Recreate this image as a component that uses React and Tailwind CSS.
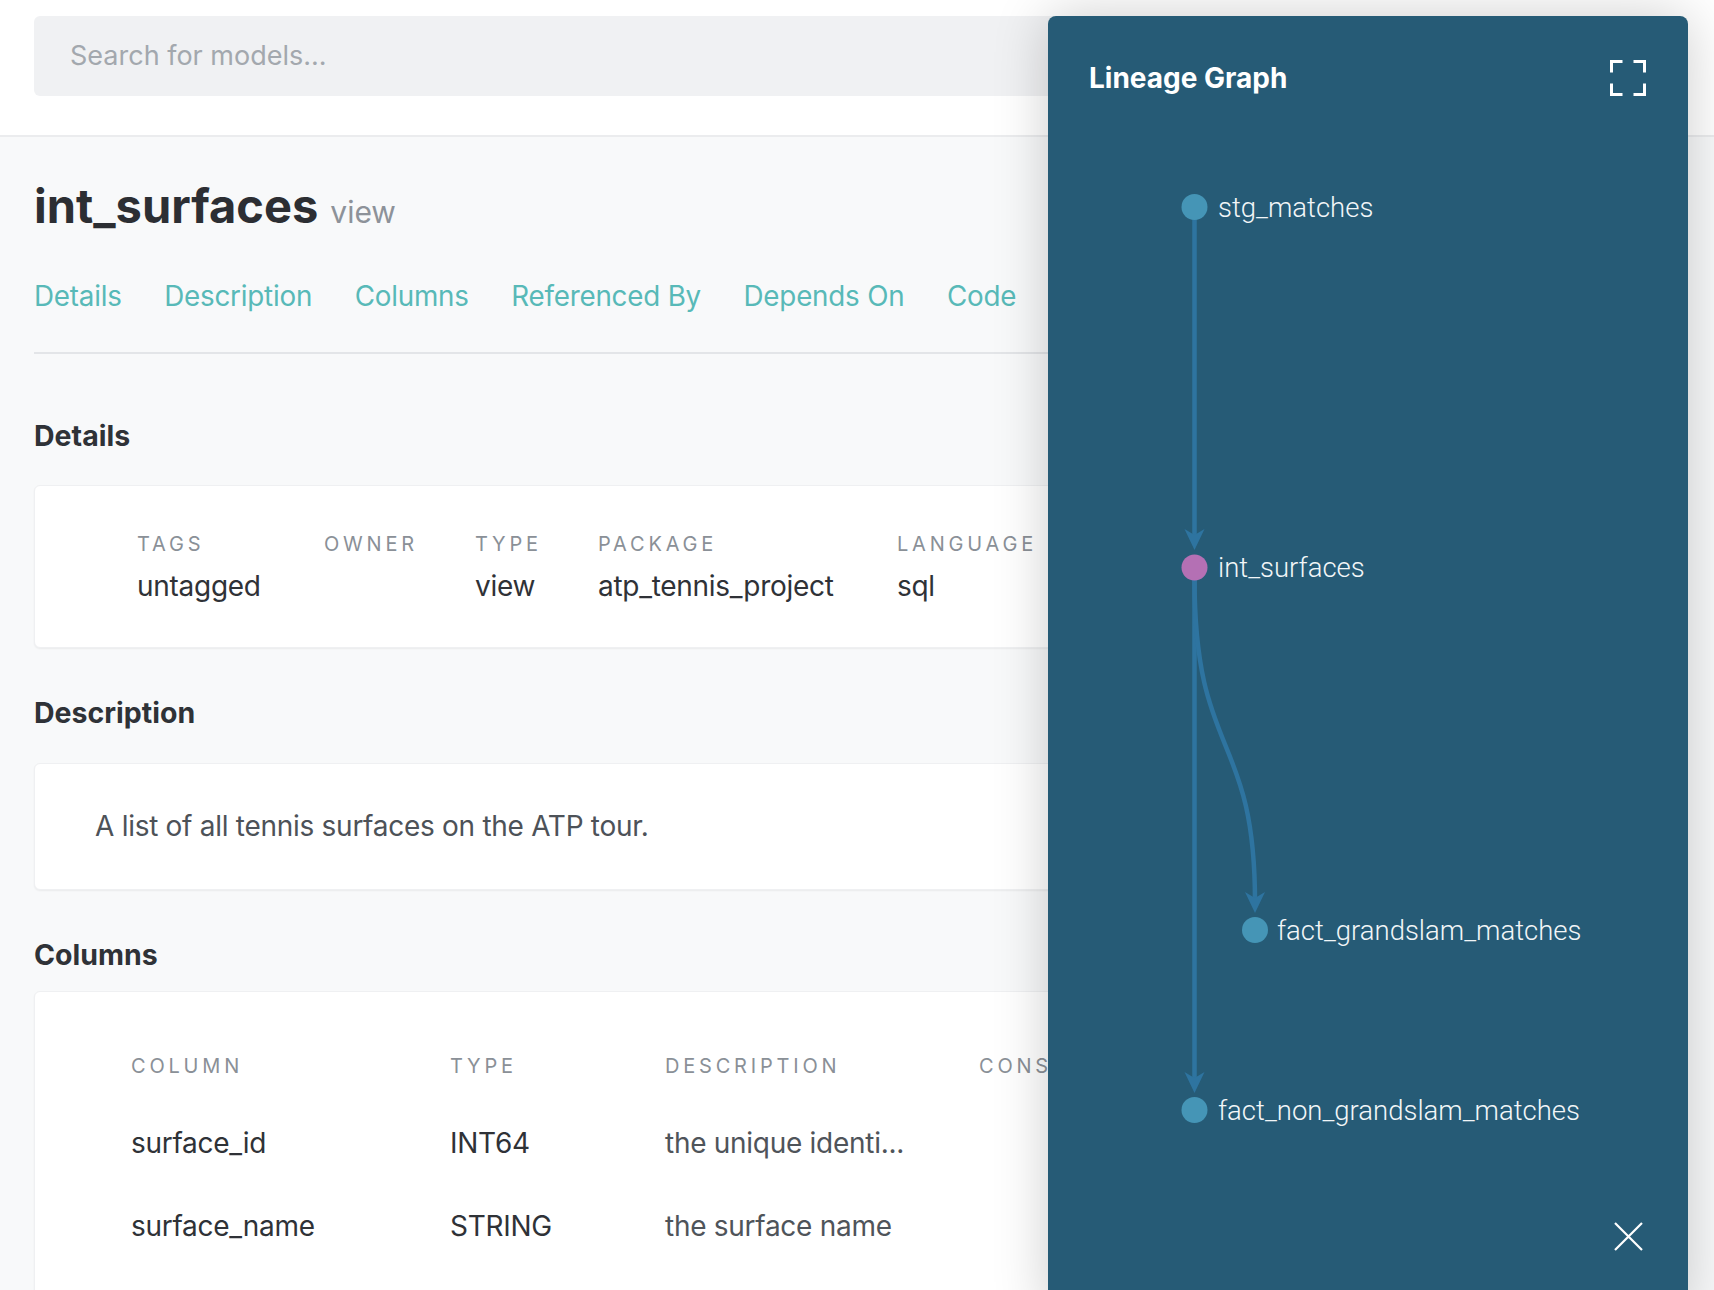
export default function App() {
  const nodeBlue = "#4595b6";
  const edge = "#2e74a0";
  const arrow = (x, y) =>
    `M${x} ${y} L${x - 10} ${y - 21} L${x} ${y - 15} L${x + 10} ${y - 21} Z`;

  const details = [
    { label: "Tags", value: "untagged", w: "w-[187px]" },
    { label: "Owner", value: "", w: "w-[151px]" },
    { label: "Type", value: "view", w: "w-[123px]" },
    { label: "Package", value: "atp_tennis_project", w: "w-[299px]" },
    { label: "Language", value: "sql", w: "w-[200px]" },
  ];

  const rows = [
    ["surface_id", "INT64", "the unique identi..."],
    ["surface_name", "STRING", "the surface name"],
  ];

  const cx = 146.5;

  return (
    <div className="relative w-full h-[1290px] overflow-hidden bg-[#f8f9fa] [font-family:Inter,sans-serif]">
      {/* Header */}
      <div className="h-[137px] bg-white border-b-2 border-[#ebecee] pt-[16px] px-[34px]">
        <div className="h-[80px] rounded-[6px] bg-[#f0f1f3] flex items-center pl-[36px] text-[27px] text-[#a3a8ae]">
          Search for models...
        </div>
      </div>

      {/* Content */}
      <div className="px-[34px] pt-[45px]">
        <div className="flex items-baseline gap-[12px]">
          <h1 className="text-[47px] leading-[48px] font-bold text-[#2c2e33]">int_surfaces</h1>
          <span className="text-[30px] leading-[48px] text-[#8d9299]">view</span>
        </div>

        <nav className="mt-[40px] pb-[36px] border-b-2 border-[#e3e5e8] flex gap-[42.5px] text-[27.8px] tracking-[-0.008em] leading-[40px] text-[#58b9b8]">
          <span>Details</span>
          <span>Description</span>
          <span>Columns</span>
          <span>Referenced By</span>
          <span>Depends On</span>
          <span>Code</span>
        </nav>

        <h3 className="mt-[62px] text-[28.5px] leading-[40px] font-bold text-[#2f3237]">Details</h3>
        <div className="mt-[29px] h-[163px] bg-white rounded-[6px] border border-[#eff0f2] shadow-[0_1px_2px_rgba(0,0,0,0.06)] pt-[46px] pl-[102px] flex">
          {details.map((d) => (
            <div key={d.label} className={`${d.w} shrink-0`}>
              <div className="text-[20px] leading-[24px] uppercase tracking-[0.19em] text-[#8a9097]">{d.label}</div>
              <div className="mt-[10px] text-[28px] leading-[40px] tracking-[-0.01em] text-[#2f3237]">{d.value}</div>
            </div>
          ))}
        </div>

        <h3 className="mt-[45px] text-[28.5px] leading-[40px] font-bold text-[#2f3237]">Description</h3>
        <div className="mt-[30px] bg-white rounded-[6px] border border-[#eff0f2] shadow-[0_1px_2px_rgba(0,0,0,0.06)] pt-[42px] pb-[43px] pl-[60px] text-[28px] leading-[40px] tracking-[-0.01em] text-[#4d5258]">
          A list of all tennis surfaces on the ATP tour.
        </div>

        <h3 className="mt-[45px] text-[28.5px] leading-[40px] font-bold text-[#2f3237]">Columns</h3>
        <div className="mt-[16px] h-[400px] bg-white rounded-[6px] border border-[#eff0f2] shadow-[0_1px_2px_rgba(0,0,0,0.06)] pt-[62px] pl-[96px]">
          <div className="grid grid-cols-[319px_215px_314px_1fr] text-[20px] leading-[24px] uppercase tracking-[0.19em] text-[#8a9097]">
            <div>Column</div>
            <div>Type</div>
            <div>Description</div>
            <div>Constraints</div>
          </div>
          <div className="mt-[45px] flex flex-col gap-[43px]">
            {rows.map((r) => (
              <div key={r[0]} className="grid grid-cols-[319px_215px_314px_1fr] text-[28px] leading-[40px] tracking-[-0.01em]">
                <div className="text-[#2f3237]">{r[0]}</div>
                <div className="text-[#2f3237]">{r[1]}</div>
                <div className="text-[#4f545a]">{r[2]}</div>
                <div></div>
              </div>
            ))}
          </div>
        </div>
      </div>

      {/* Lineage graph panel */}
      <div className="absolute top-[16px] left-[1048px] w-[640px] h-[1300px] bg-[#265b76] rounded-t-[8px] shadow-[0_0_55px_rgba(0,0,0,0.2)]">
        <svg className="absolute left-0 top-0" width="640" height="1274" viewBox="0 0 640 1274">
          <line x1={cx} y1="200" x2={cx} y2="522" stroke={edge} strokeWidth="4.5" />
          <path d={arrow(cx, 534)} fill={edge} />
          <line x1={cx} y1="560" x2={cx} y2="1066" stroke={edge} strokeWidth="4.5" />
          <path d={arrow(cx, 1077)} fill={edge} />
          <path d={`M${cx} 562 C${cx} 744 207 714 207 886`} fill="none" stroke={edge} strokeWidth="4.5" />
          <path d={arrow(207, 897)} fill={edge} />

          <circle cx={cx} cy="191" r="13" fill={nodeBlue} />
          <circle cx={cx} cy="551.5" r="13" fill="#b470b4" />
          <circle cx="207" cy="914" r="13" fill={nodeBlue} />
          <circle cx={cx} cy="1094" r="13" fill={nodeBlue} />

          <g className="[font-family:Roboto,sans-serif]" fontWeight="300" fontSize="27.5" fill="#f2f6f8">
            <text x="170" y="191" dominantBaseline="central">stg_matches</text>
            <text x="170" y="551.5" dominantBaseline="central">int_surfaces</text>
            <text x="229" y="914" dominantBaseline="central">fact_grandslam_matches</text>
            <text x="170" y="1094" dominantBaseline="central">fact_non_grandslam_matches</text>
          </g>
        </svg>

        <div className="relative flex items-center justify-between pl-[41px] pr-[42px] pt-[42px]">
          <h2 className="text-[28px] leading-[40px] font-bold text-white">Lineage Graph</h2>
          <svg width="36" height="36" viewBox="0 0 36 36" fill="none" stroke="white" strokeWidth="3">
            <path d="M1.5 12.5 V1.5 H12.5" />
            <path d="M23.5 1.5 H34.5 V12.5" />
            <path d="M1.5 23.5 V34.5 H12.5" />
            <path d="M34.5 23.5 V34.5 H23.5" />
          </svg>
        </div>

        <button className="absolute left-[566px] top-[1206px] w-[29px] h-[29px]">
          <svg width="29" height="29" viewBox="0 0 29 29" fill="none" stroke="white" strokeWidth="2.2">
            <path d="M1 1 L28 28 M28 1 L1 28" />
          </svg>
        </button>
      </div>
    </div>
  );
}
